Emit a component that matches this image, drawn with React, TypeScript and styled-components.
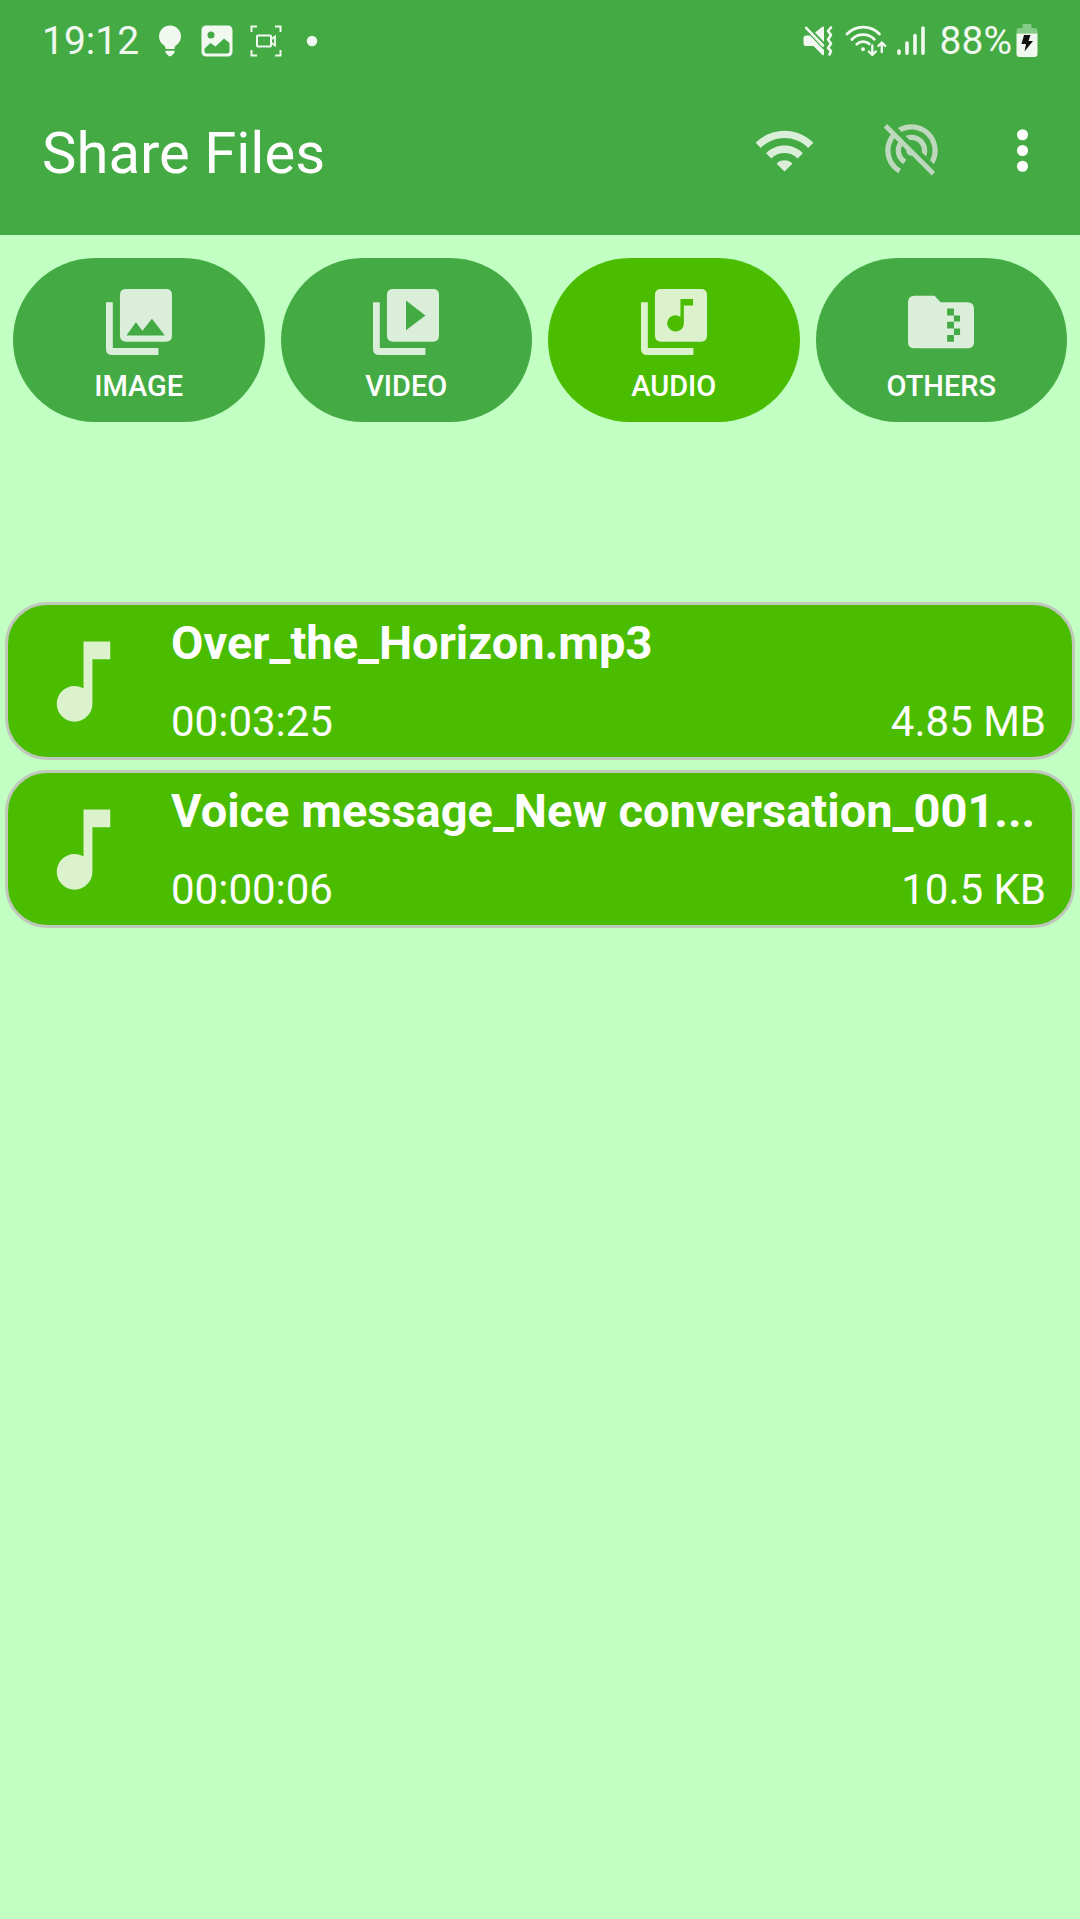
import React from "react";
import styled, { createGlobalStyle } from "styled-components";

const GlobalStyle = createGlobalStyle`
  *, *::before, *::after { box-sizing: border-box; }
  body {
    margin: 0;
    background: #c2ffc2;
    font-family: Roboto, "Noto Sans", sans-serif;
    color: #fff;
  }
  svg { display: block; flex: none; }
`;

const Header = styled.header`
  background: #44ab44;
`;

const StatusBar = styled.div`
  display: flex;
  align-items: center;
  justify-content: space-between;
  height: 82px;
  padding: 0 42px;
  color: #f0f8f0;
  font-size: 39px;
  line-height: 48px;
`;

const StatusGroup = styled.div<{ $gap: number }>`
  display: flex;
  align-items: center;
  gap: ${(p) => p.$gap}px;
`;

const AppBar = styled.div`
  display: flex;
  align-items: center;
  height: 153px;
  padding: 0 11px 16px 42px;
`;

const Title = styled.h1`
  flex: 1;
  margin: 0;
  padding-top: 4px;
  font-size: 58px;
  line-height: 68px;
  font-weight: 400;
`;

const IconButton = styled.button<{ $narrow?: boolean }>`
  display: flex;
  align-items: center;
  justify-content: center;
  width: ${(p) => (p.$narrow ? 94 : 127)}px;
  height: 126px;
  padding: 0;
  border: 0;
  background: none;
  color: #fff;
  cursor: pointer;
`;

const Categories = styled.nav`
  display: grid;
  grid-template-columns: repeat(4, 1fr);
  gap: 16px;
  padding: 23px 13px 0;
`;

const Category = styled.button<{ $active?: boolean }>`
  display: flex;
  flex-direction: column;
  align-items: center;
  gap: 14px;
  height: 164px;
  padding: 31px 0 0;
  border: 0;
  border-radius: 82px;
  background: ${(p) => (p.$active ? "#4abd00" : "#44ab44")};
  color: #fff;
  font-family: inherit;
  font-size: 29px;
  line-height: 34px;
  font-weight: 500;
  cursor: pointer;
`;

const FileList = styled.ul`
  display: flex;
  flex-direction: column;
  gap: 10px;
  margin: 0;
  padding: 180px 5px 0;
  list-style: none;
`;

const FileRow = styled.li`
  display: flex;
  align-items: center;
  gap: 34px;
  height: 158px;
  padding: 0 26px 0 22px;
  border: 3px solid #c0c8bc;
  border-radius: 42px;
  background: #4abd00;
`;

const FileInfo = styled.div`
  display: flex;
  flex: 1;
  flex-direction: column;
  gap: 26px;
  min-width: 0;
`;

const FileName = styled.span`
  overflow: hidden;
  font-size: 47px;
  line-height: 56px;
  font-weight: 700;
  white-space: nowrap;
  text-overflow: ellipsis;
`;

const FileMeta = styled.span`
  display: flex;
  justify-content: space-between;
  font-size: 42px;
  line-height: 50px;
`;

const BulbIcon = () => (
  <svg width="28" height="32" viewBox="-2 0 28 32" fill="currentColor">
    <path d="M12 0.5a11 11 0 0 0-11 11c0 4 2 6.500 4.500 8.500 1.500 1.200 2 2 2 4h9c0-2 .5-2.800 2-4 2.500-2 4.500-4.500 4.500-8.500a11 11 0 0 0-11-11z" />
    <path d="M7.500 25.700h9v2l-3 3q-1.500 1.200-3 0l-3-3z" />
  </svg>
);

const PictureIcon = () => (
  <svg width="32" height="32" viewBox="0 0 32 32">
    <path
      fill="currentColor"
      fillRule="evenodd"
      d="M5 .5h22a4.500 4.500 0 0 1 4.500 4.500v22a4.500 4.500 0 0 1-4.500 4.500H5A4.500 4.500 0 0 1 .5 27V5A4.500 4.500 0 0 1 5 .5zM10 6.500a3.500 3.500 0 1 0 0 7 3.500 3.500 0 0 0 0-7zM9.500 18L3.500 23.500V26a2.500 2.500 0 0 0 2.500 2.500h20a2.500 2.500 0 0 0 2.500-2.500V18l-5.500-4.500-8.500 8z"
    />
  </svg>
);

const RecordIcon = () => (
  <svg width="32" height="32" viewBox="0 0 32 32" fill="none" stroke="currentColor" strokeWidth="2">
    <path d="M1.500 7V1.500H7M25 1.500h5.500V7M30.500 25v5.500H25M7 30.500H1.500V25" />
    <rect x="7" y="10.500" width="14" height="11" rx="1" />
    <path d="M21 14.500l4-3v9l-4-3" strokeWidth="1.800" />
  </svg>
);

const DotIcon = () => (
  <svg width="12" height="12" viewBox="0 0 12 12" fill="currentColor">
    <circle cx="6" cy="6" r="5.200" />
  </svg>
);

const MuteIcon = () => (
  <svg width="32" height="32" viewBox="0 0 32 32">
    <path fill="currentColor" d="M3 10.500h4l14 14.500v4q0 2-1.600.9L10.500 21H3q-2.500 0-2.500-2.500V13q0-2.500 2.500-2.500zM12 7.500l7.400-5.700Q21 1 21 2.800V17z" />
    <path fill="none" stroke="currentColor" strokeWidth="2.600" strokeLinecap="round" strokeLinejoin="round" d="M3.200 2.800L20 20.500M28 2.500l-3 3.500 3 4-3 4.500 3 4-3 4.500 3 3-1.500 3.500" />
  </svg>
);

const SmallWifiIcon = () => (
  <svg width="42" height="34" viewBox="0 0 42 34" fill="none" stroke="currentColor" strokeWidth="2.800" strokeLinecap="round" strokeLinejoin="round">
    <path d="M2 10a22.500 22.500 0 0 1 32.500 0M6.800 15.400a16 16 0 0 1 22.500-.2M11.800 20.200a9.500 9.500 0 0 1 12.500-.3" />
    <circle cx="18" cy="25.300" r="1.200" fill="currentColor" strokeWidth="1.600" />
    <path d="M27.300 21.500v9M23.800 27.500l3.500 3.500 3.500-3.500M36.800 28v-9M33.300 22l3.500-3.500 3.500 3.500" strokeWidth="2.400" />
  </svg>
);

const SignalIcon = () => (
  <svg width="28" height="30" viewBox="0 0 28 30" fill="none" stroke="currentColor" strokeWidth="3.600" strokeLinecap="round">
    <path d="M2 25v2.300M10 17v10.300M18 9.500v17.800M26 2v25.300" />
  </svg>
);

const BatteryIcon = () => (
  <svg width="22" height="34" viewBox="0 0 22 34">
    <path fill="#86cb86" d="M7.500 0h7q1 0 1 1v3h3q3 0 3 3v2.500h-21V7q0-3 3-3h3V1q0-1 1-1z" />
    <path fill="#f0f8f0" d="M.5 9.500h21v20.500q0 3-3 3h-15q-3 0-3-3z" />
    <path fill="#111" d="M8 11h6.500l-2 6H17L8.500 27.500l1.500-7.500H5.500z" />
  </svg>
);

const WifiIcon = () => (
  <svg width="63" height="63" viewBox="0 0 24 24" fill="#daeeda">
    <path d="M1 9l2 2c4.970-4.970 13.030-4.970 18 0l2-2C16.930 2.930 7.080 2.930 1 9zm8 8l3 3 3-3c-1.650-1.660-4.340-1.660-6 0zm-4-4l2 2c2.760-2.760 7.240-2.760 10 0l2-2C15.140 9.140 8.870 9.140 5 13z" />
  </svg>
);

const HotspotOffIcon = () => (
  <svg width="63" height="63" viewBox="0 0 24 24" fill="#bdd8bd">
    <path d="M17.560 14.240c.28-.69.44-1.450.44-2.240 0-3.310-2.690-6-6-6-.79 0-1.550.16-2.240.44l1.620 1.620c.2-.03.41-.06.62-.06 2.210 0 4 1.790 4 4 0 .21-.02.42-.05.63l1.610 1.610zM12 4c4.420 0 8 3.580 8 8 0 1.350-.35 2.620-.95 3.740l1.470 1.470C21.460 15.690 22 13.910 22 12c0-5.520-4.480-10-10-10-1.910 0-3.690.55-5.210 1.470l1.460 1.460C9.370 4.340 10.650 4 12 4zM2.700 1.930L1.430 3.200l2.670 2.670C2.790 7.570 2 9.690 2 12c0 3.700 2.010 6.920 4.990 8.650l1-1.730C5.610 17.530 4 14.960 4 12c0-1.760.57-3.380 1.530-4.690l1.430 1.440C6.360 9.680 6 10.800 6 12c0 2.220 1.210 4.150 3 5.190l1-1.740c-1.190-.7-2-1.970-2-3.450 0-.65.17-1.250.44-1.790l1.580 1.580L10 12c0 1.100.9 2 2 2l.21-.02.01.01 7.510 7.510L21 20.230z" />
  </svg>
);

const MoreIcon = () => (
  <svg width="63" height="63" viewBox="0 0 24 24" fill="currentColor">
    <circle cx="12" cy="6" r="2.100" />
    <circle cx="12" cy="12" r="2.100" />
    <circle cx="12" cy="18" r="2.100" />
  </svg>
);

const CategorySvg = styled.svg.attrs({
  width: 66,
  height: 66,
  viewBox: "0 0 194 199",
  preserveAspectRatio: "none",
})<{ $tint: string }>`
  fill: ${(p) => p.$tint};
  fill-rule: evenodd;
`;

const stackPath =
  "M60 0h116q18 0 18 18v123q0 18-18 18H60q-19 0-19-18V18q0-18 19-18zM0 40h20v138h134v21H19q-19 0-19-19z";

const zipFolderPath =
  "M19 20h59l18 20h79q19 0 19 20v100q0 19-19 19H19q-19 0-19-19V40q0-20 19-20zM115 59h20v21h18v18h-18v21h18v20h-18v20h-20v-20h20v-20h-20v-20h20v-19h-20z";

const NoteIcon = () => (
  <svg width="107" height="107" viewBox="0 0 24 24" fill="#dbf2cc">
    <path d="M12 3v10.550c-.59-.34-1.270-.55-2-.55-2.210 0-4 1.790-4 4s1.790 4 4 4 4-1.790 4-4V7h4V3h-6z" />
  </svg>
);

const categories = [
  { label: "IMAGE", path: stackPath + "M60 140h113L135 90l-28 36-19-26z" },
  { label: "VIDEO", path: stackPath + "M97 35v89l57-44z" },
  { label: "AUDIO", active: true, path: stackPath + "M116 30h37v20h-27v54a24.500 24.500 0 1 1-10-20z" },
  { label: "OTHERS", path: zipFolderPath },
];

const files = [
  { name: "Over_the_Horizon.mp3", duration: "00:03:25", size: "4.85 MB" },
  { name: "Voice message_New conversation_001...", duration: "00:00:06", size: "10.5 KB" },
];

export default function App() {
  return (
    <>
      <GlobalStyle />
      <Header>
        <StatusBar>
          <StatusGroup $gap={24}>
            <StatusGroup $gap={17}>
              <span>19:12</span>
              <BulbIcon />
              <PictureIcon />
              <RecordIcon />
            </StatusGroup>
            <DotIcon />
          </StatusGroup>
          <StatusGroup $gap={15}>
            <StatusGroup $gap={10}>
              <MuteIcon />
              <SmallWifiIcon />
              <SignalIcon />
            </StatusGroup>
            <StatusGroup $gap={4}>
              <span>88%</span>
              <BatteryIcon />
            </StatusGroup>
          </StatusGroup>
        </StatusBar>
        <AppBar>
          <Title>Share Files</Title>
          <IconButton aria-label="Wi-Fi">
            <WifiIcon />
          </IconButton>
          <IconButton aria-label="Hotspot off">
            <HotspotOffIcon />
          </IconButton>
          <IconButton $narrow aria-label="More options">
            <MoreIcon />
          </IconButton>
        </AppBar>
      </Header>
      <main>
        <Categories>
          {categories.map((c) => (
            <Category key={c.label} $active={c.active}>
              <CategorySvg $tint={c.active ? "#dbf2cc" : "#daeeda"}>
                <path d={c.path} />
              </CategorySvg>
              {c.label}
            </Category>
          ))}
        </Categories>
        <FileList>
          {files.map((f) => (
            <FileRow key={f.name}>
              <NoteIcon />
              <FileInfo>
                <FileName>{f.name}</FileName>
                <FileMeta>
                  <span>{f.duration}</span>
                  <span>{f.size}</span>
                </FileMeta>
              </FileInfo>
            </FileRow>
          ))}
        </FileList>
      </main>
    </>
  );
}
